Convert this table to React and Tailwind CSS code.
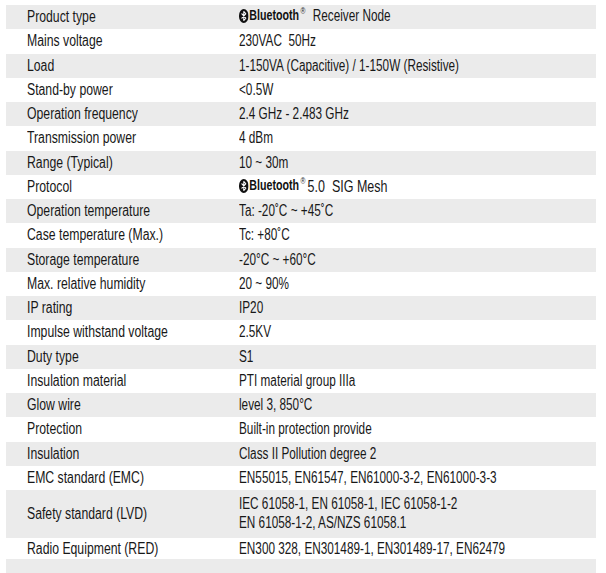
import React from 'react';

const BtMark = () => (
  <span className="inline-flex items-center whitespace-nowrap">
    <svg width="13" height="14" viewBox="0 0 13 14" className="mr-[1px]">
      <rect x="0" y="0" width="13" height="14" rx="6.5" ry="6.5" fill="#111" />
      <path d="M3.5 4.6 L9.3 9.3 L6.5 11.4 L6.5 2.6 L9.3 4.7 L3.5 9.4" fill="none" stroke="#fff" strokeWidth="1.3" strokeLinejoin="round" />
    </svg>
    <span className="font-bold text-[14.5px] text-[#111]">Bluetooth</span>
    <sup className="text-[9px] ml-[2px] -top-[5px]">®</sup>
  </span>
);

const rows = [
  ['Product type', <span className="inline-flex items-center"><BtMark /><span className="ml-[10px]">Receiver Node</span></span>],
  ['Mains voltage', '230VAC  50Hz'],
  ['Load', '1-150VA (Capacitive) / 1-150W (Resistive)'],
  ['Stand-by power', '<0.5W'],
  ['Operation frequency', '2.4 GHz - 2.483 GHz'],
  ['Transmission power', '4 dBm'],
  ['Range (Typical)', '10 ~ 30m'],
  ['Protocol', <span className="inline-flex items-center"><BtMark /><span className="ml-[3px] text-[17px]">5.0  SIG Mesh</span></span>],
  ['Operation temperature', 'Ta: -20˚C ~ +45˚C'],
  ['Case temperature (Max.)', 'Tc: +80˚C'],
  ['Storage temperature', '-20°C ~ +60°C'],
  ['Max. relative humidity', '20 ~ 90%'],
  ['IP rating', 'IP20'],
  ['Impulse withstand voltage', '2.5KV'],
  ['Duty type', 'S1'],
  ['Insulation material', 'PTI material group IIIa'],
  ['Glow wire', 'level 3, 850°C'],
  ['Protection', 'Built-in protection provide'],
  ['Insulation', 'Class II Pollution degree 2'],
  ['EMC standard (EMC)', 'EN55015, EN61547, EN61000-3-2, EN61000-3-3'],
];

const Label = ({ children }) => (
  <div className="w-[233px] shrink-0 pl-[21px] whitespace-nowrap">
    <span className="inline-block origin-left scale-x-[0.765]">{children}</span>
  </div>
);

const Value = ({ children }) => (
  <div className="flex-1 min-w-0 whitespace-pre">
    <span className="inline-block origin-left scale-x-[0.735]">{children}</span>
  </div>
);

const App = () => {
  return (
    <div className="w-[606px] h-[573px] overflow-hidden bg-white pt-[5px] pl-[6px] pr-[10px] text-[#181818] text-[16px] font-['Liberation_Sans',Arial,sans-serif]">
      {rows.map(([label, value], i) => (
        <div key={label} className={`flex items-center h-[24.25px] ${i % 2 === 0 ? 'bg-[#ebebeb]' : ''}`}>
          <Label>{label}</Label>
          <Value>{value}</Value>
        </div>
      ))}
      <div className="flex items-center h-[48px] bg-[#ebebeb]">
        <Label>Safety standard (LVD)</Label>
        <Value>
          <span className="block leading-[19px]">IEC 61058-1, EN 61058-1, IEC 61058-1-2</span>
          <span className="block leading-[19px]">EN 61058-1-2, AS/NZS 61058.1</span>
        </Value>
      </div>
      <div className="flex items-center h-[21px]">
        <Label>Radio Equipment (RED)</Label>
        <Value>EN300 328, EN301489-1, EN301489-17, EN62479</Value>
      </div>
      <div className="h-[24px] bg-[#ebebeb]" />
    </div>
  );
};

export default App;
